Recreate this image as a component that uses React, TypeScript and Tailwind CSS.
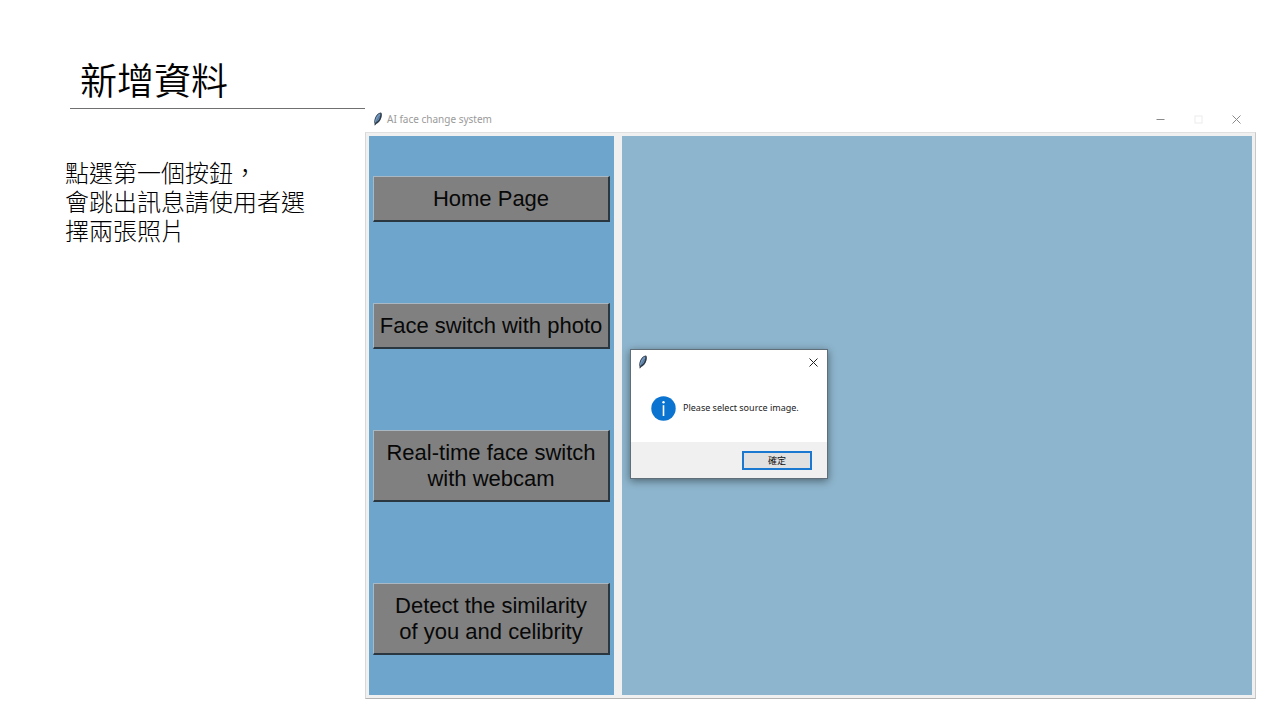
import React from "react";

const menu: string[][] = [
  ["Home Page"],
  ["Face switch with photo"],
  ["Real-time face switch", "with webcam"],
  ["Detect the similarity", "of you and celibrity"],
];

function Feather() {
  return (
    <svg viewBox="0 0 10 14" className="h-[14px] w-[10px] shrink-0" aria-hidden="true">
      <path d="M7.8 0.4C5.4 0.6 3 3 2 6C1.3 8.2 1 10.2 1.6 11.6L1.5 13.4L2.5 13L3.2 12C5.4 11 7.8 8.4 8.6 5C9.1 2.8 9 0.6 7.8 0.4Z" fill="#2d3947" />
      <path d="M7.3 1.2C5 2 3.4 4.2 2.5 7C1.9 8.8 1.8 10 2.2 11L5 8.8C6.6 6.6 7.6 4 7.3 1.2Z" fill="#7098c0" />
      <path d="M6.6 4L2.4 11.4" stroke="#3a506a" strokeWidth="0.5" fill="none" />
    </svg>
  );
}

function Cross({ color }: { color: string }) {
  return (
    <svg viewBox="0 0 9 9" className="h-[9px] w-[9px]" aria-hidden="true">
      <path d="M0.5 0.5L8.5 8.5M8.5 0.5L0.5 8.5" stroke={color} strokeWidth="1" fill="none" />
    </svg>
  );
}

function MessageBox() {
  return (
    <div
      role="dialog"
      aria-label="Please select source image."
      className="absolute left-2 top-[213px] w-[198px] border border-[#5f6e78] bg-white shadow-[0_2px_8px_rgba(0,0,0,0.45)]"
    >
      <div className="flex h-6 items-center justify-between pl-[7px] pr-[9px]">
        <Feather />
        <button type="button" aria-label="Close">
          <Cross color="#222222" />
        </button>
      </div>
      <div className="flex h-[68px] items-center gap-[7px] pl-5">
        <svg viewBox="0 0 25 25" className="h-[25px] w-[25px] shrink-0" aria-hidden="true">
          <circle cx="12.5" cy="12.5" r="12.2" fill="#0b74d1" />
          <rect x="11.7" y="9.2" width="1.6" height="10.8" fill="#ffffff" />
          <circle cx="12.5" cy="6.2" r="1.2" fill="#ffffff" />
        </svg>
        <p className="whitespace-nowrap font-['Noto_Sans','Noto_Sans_CJK_TC',sans-serif] text-[9px] leading-3 text-[#222222]">
          Please select source image.
        </p>
      </div>
      <div className="flex h-9 items-center justify-end bg-[#f0f0f0] pr-[15px]">
        <button
          type="button"
          className="h-[19px] w-[70px] border-2 border-[#1a78d0] bg-[#e1e1e1] text-center font-['Noto_Sans_CJK_TC',sans-serif] text-[9px] leading-[15px] text-[#111111]"
        >
          確定
        </button>
      </div>
    </div>
  );
}

export default function App() {
  return (
    <div className="flex min-h-screen bg-white pb-[21px] pr-6 font-['Liberation_Sans','Noto_Sans_CJK_TC',sans-serif] text-black">
      <section className="w-[365px] shrink-0 pt-14">
        <h1 className="ml-[70px] h-[53px] border-b border-[#707070] pl-[10px] text-[37px] font-[350] leading-[54px]">
          新增資料
        </h1>
        <p className="ml-[65px] mt-[50px] w-[250px] text-[24px] font-light leading-[29px]">
          點選第一個按鈕，
          <br />
          會跳出訊息請使用者選擇兩張照片
        </p>
      </section>

      <main className="mt-[106px] flex min-w-0 flex-1 flex-col">
        <header className="flex h-[26px] shrink-0 items-center bg-white pl-2 pr-[15px]">
          <Feather />
          <span className="ml-1 flex-1 font-['Noto_Sans',sans-serif] text-[10px] leading-4 text-[#9a9a9a]">
            AI face change system
          </span>
          <div className="flex items-center gap-[29px]">
            <button type="button" aria-label="Minimize">
              <svg viewBox="0 0 9 9" className="h-[9px] w-[9px]" aria-hidden="true">
                <path d="M0.5 4.5H8.5" stroke="#8a8a8a" strokeWidth="1" />
              </svg>
            </button>
            <button type="button" aria-label="Maximize">
              <svg viewBox="0 0 9 9" className="h-[9px] w-[9px]" aria-hidden="true">
                <rect x="1" y="1" width="7" height="7" fill="none" stroke="#ececec" />
              </svg>
            </button>
            <button type="button" aria-label="Close window">
              <Cross color="#8a8a8a" />
            </button>
          </div>
        </header>

        <div className="flex flex-1 gap-2 border border-b-[#b4b4b4] border-l-[#d8d8d8] border-r-[#c8c8c8] border-t-[#e0e0e0] bg-[#f0f0f0] p-[3px]">
          <nav className="flex w-[245px] shrink-0 flex-col justify-around bg-[#6da5cd] px-1">
            {menu.map((lines) => (
              <button
                key={lines[0]}
                type="button"
                className="border-b-2 border-l border-r-2 border-t border-b-[#2b3740] border-l-[#a9b8c2] border-r-[#2b3740] border-t-[#a9b8c2] bg-[#808080] pb-2 pt-[9px] font-['Liberation_Sans',Arial,sans-serif] text-[22px] leading-[26px] text-[#080808]"
              >
                {lines.map((line) => (
                  <span key={line} className="block whitespace-nowrap">
                    {line}
                  </span>
                ))}
              </button>
            ))}
          </nav>
          <div className="relative min-w-0 flex-1 bg-[#8db5cd]">
            <MessageBox />
          </div>
        </div>
      </main>
    </div>
  );
}
